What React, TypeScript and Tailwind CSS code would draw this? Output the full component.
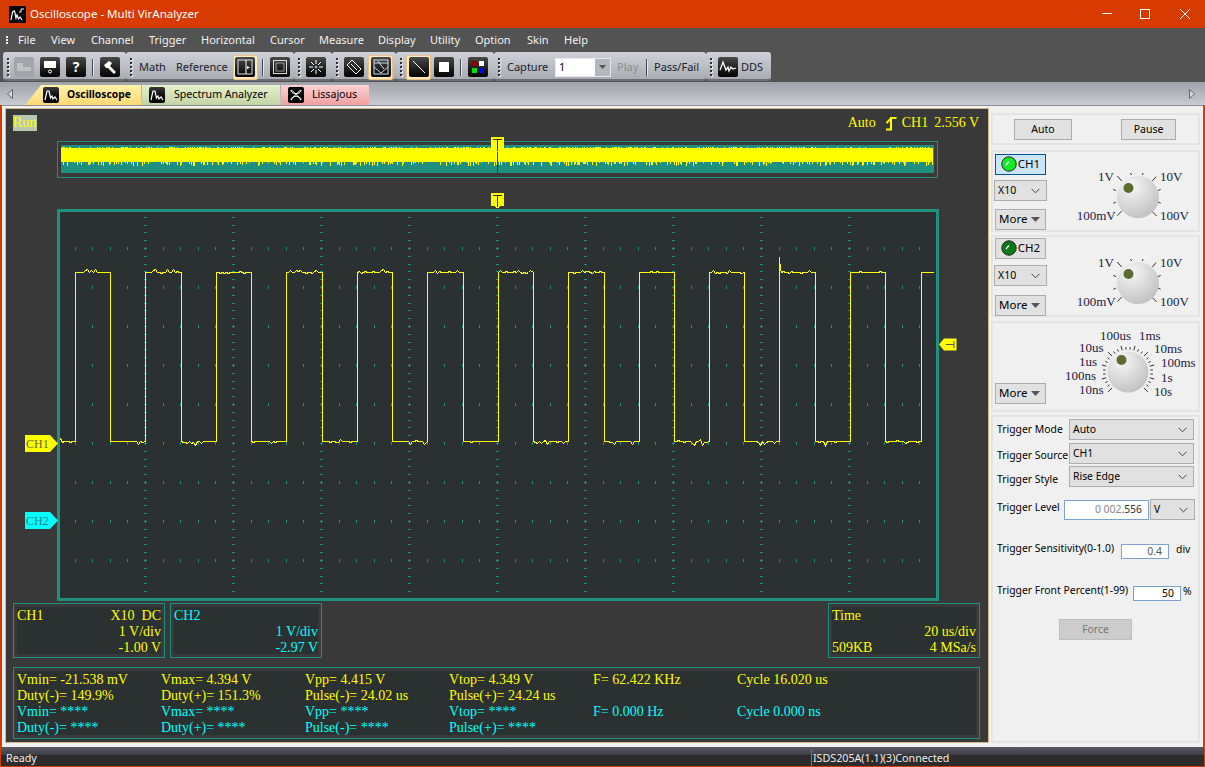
import React from 'react';

// seeded noise so every render gives the same trace
function makeRand(seed: number) {
  let s = seed;
  return () => {
    s = (s * 16807) % 2147483647;
    return (s - 1) / 2147483646;
  };
}

const rises = [75, 145, 216, 286, 357, 427, 498, 568, 639, 709, 779, 850, 921];
const falls = [110, 181, 251, 322, 392, 463, 533, 604, 674, 744, 815, 885, 960];
const PLOT_X = 57;
const PLOT_Y = 209;

function buildTrace() {
  const r = makeRand(4711);
  let d = 'M3 ' + (441 - PLOT_Y - 3);
  const noisy = (from: number, to: number, base: number, up: boolean) => {
    let out = '';
    for (let x = from + 2; x < to - 1; x += 2) {
      const v = r();
      const off = v > 0.78 ? (up ? -1 - Math.round(r() * 2) : -2 + Math.round(r() * 6)) : v < 0.1 ? 1 : 0;
      out += ` L${x - PLOT_X} ${base + off - PLOT_Y}`;
    }
    return out;
  };
  d += noisy(60, 75, 441, false);
  rises.forEach((rx, i) => {
    const fx = Math.min(falls[i], 933);
    d += ` L${rx - PLOT_X} ${441 - PLOT_Y} L${rx - PLOT_X} ${272 - PLOT_Y}`;
    if (rx === 779) d += ` L${rx - PLOT_X} ${257 - PLOT_Y} L${rx - PLOT_X + 1} ${269 - PLOT_Y} L${rx - PLOT_X + 2} ${272 - PLOT_Y}`;
    d += noisy(rx, fx, 272, true);
    d += ` L${fx - PLOT_X} ${272 - PLOT_Y}`;
    if (falls[i] > 933) return;
    d += ` L${fx - PLOT_X} ${441 - PLOT_Y}`;
    d += noisy(fx, rises[i + 1], 441, false);
  });
  return d;
}

function buildOverview() {
  const r = makeRand(991);
  const bars: string[] = [];
  for (let x = 0; x < 872; x += 1) {
    const u = r();
    const v = r();
    const top = u > 0.72 ? 2 : 3;
    const bottom = v > 0.7 ? 18 + Math.round(r() * 3) : 17;
    bars.push(`M${x + 0.5} ${top}V${bottom}`);
  }
  return bars.join('');
}

const tracePath = buildTrace();
const overviewPath = buildOverview();

function gridTicks() {
  let d = '';
  for (let i = 1; i < 10; i++) {
    for (let j = 1; j < 50; j++) {
      d += `M${i * 88 - 1} ${Math.round(j * 7.8) + 0.5}h3`;
    }
  }
  for (let i = 1; i < 10; i++) {
    for (let j = 1; j < 50; j++) {
      d += `M${Math.round(j * 17.6) + 0.5} ${i * 39 - 1}v3`;
    }
  }
  return d;
}

function Grip({ dark = false }: { dark?: boolean }) {
  if (dark) {
    return (
      <div className="flex flex-col gap-[1px] w-[3px] shrink-0">
        {[0, 1, 2].map(i => <span key={i} className="block w-[2px] h-[2px] bg-[#f0f0f0]" />)}
      </div>
    );
  }
  return (
    <div className="flex flex-col gap-[2px] w-[3px] shrink-0">
      {[0, 1, 2, 3, 4].map(i => <span key={i} className="block w-[2px] h-[2px] bg-[#2e2e33] shadow-[1px_1px_0_#eeeeee]" />)}
    </div>
  );
}

function Seg({ className, children }: { className: string; children: React.ReactNode }) {
  return (
    <div className={`h-[29px] shrink-0 pl-[4px] pt-[3px] rounded-[3px] bg-gradient-to-b from-[#cfd2d8] to-[#a9acb3] border-b-[2px] border-[#6b6d72] flex items-center ${className}`}>
      {children}
    </div>
  );
}

function ToolBtn({ children, active = false, off = false }: { children?: React.ReactNode; active?: boolean; off?: boolean }) {
  const face = off ? 'bg-[#a3a5aa]' : 'bg-gradient-to-b from-[#4a4a4a] to-[#050505]';
  if (active) {
    return (
      <div className="w-[25px] h-[25px] rounded-[2px] border border-[#f0c080] bg-[#ffe9c0] flex items-center justify-center shrink-0">
        <div className={`w-[20px] h-[20px] rounded-[2px] flex items-center justify-center ${face}`}>{children}</div>
      </div>
    );
  }
  return <div className={`w-[20px] h-[20px] rounded-[2px] flex items-center justify-center shrink-0 ${face}`}>{children}</div>;
}

function Sep() {
  return <div className="w-px h-[17px] bg-[#45474c] border-r border-[#e6e6e6] box-content shrink-0" />;
}

function Chevron({ className = 'text-[#444]' }: { className?: string }) {
  return (
    <svg width="9" height="6" viewBox="0 0 9 6" className={className}>
      <path d="M0.5 0.8 L4.5 4.8 L8.5 0.8" fill="none" stroke="currentColor" strokeWidth="1" />
    </svg>
  );
}

function ComboBox({ label, className }: { label: string; className: string }) {
  return (
    <div className={`flex items-center justify-between bg-[#e1e1e1] border border-[#adadad] pl-[3px] pr-[6px] text-black ${className}`}>
      <span>{label}</span>
      <Chevron />
    </div>
  );
}

function MoreBtn() {
  return (
    <div className="w-[51px] h-[21px] bg-[#e1e1e1] border border-[#adadad] flex items-center justify-between pl-[3px] pr-[5px] text-[11.5px] text-black">
      <span className="mb-px">More</span>
      <svg width="9" height="5" viewBox="0 0 9 5"><path d="M0 0H9L4.5 5Z" fill="#555" /></svg>
    </div>
  );
}

function Led({ on }: { on: boolean }) {
  return (
    <svg width="16" height="16" viewBox="0 0 16 16" className="shrink-0">
      <circle cx="8" cy="8" r="7.2" fill={on ? '#11ee22' : '#0b7a18'} stroke="#222" strokeWidth="1" />
      <path d="M5 9 L8 5.5" stroke="#fff" strokeWidth="1.2" />
    </svg>
  );
}

function VoltKnob() {
  const ticks = [
    [42.3, 11, 46.7, 16], [55.3, 8, 56.7, 10], [68.3, 8, 67, 10], [81, 11.7, 77.3, 16], [85.7, 24.3, 83, 25.7],
    [85.7, 38.3, 83, 37], [76.7, 46, 81.7, 51], [46.7, 46, 42.3, 50.7], [38.3, 24.3, 41, 25.7], [38.3, 38.3, 41, 37],
  ];
  return (
    <svg width="120" height="64" viewBox="0 0 120 64" className="block font-['Liberation_Serif',serif]">
      <defs>
        <radialGradient id="kv" cx="35%" cy="25%" r="85%">
          <stop offset="0%" stopColor="#f6f6f6" />
          <stop offset="100%" stopColor="#bdbdbd" />
        </radialGradient>
      </defs>
      {ticks.map((t, i) => (
        <line key={i} x1={t[0]} y1={t[1]} x2={t[2]} y2={t[3]} stroke="#333" strokeWidth="1" />
      ))}
      <circle cx="63" cy="32" r="21" fill="url(#kv)" />
      <circle cx="53.5" cy="23" r="5" fill="#5a6d2f" />
      <text x="23" y="16" fontSize="13" fill="#1a1a40">1V</text>
      <text x="85" y="16" fontSize="13" fill="#1a1a40">10V</text>
      <text x="1.7" y="54.5" fontSize="13" fill="#1a1a40">100mV</text>
      <text x="85" y="54.5" fontSize="13" fill="#1a1a40">100V</text>
    </svg>
  );
}

function TimeKnob() {
  const ticks: React.ReactNode[] = [];
  for (let i = 0; i <= 27; i++) {
    const a = ((135 + i * 10) * Math.PI) / 180;
    const r1 = 22.5;
    const r2 = i % 9 === 0 ? 28 : i % 3 === 0 ? 27 : 25;
    ticks.push(
      <line key={i} x1={74 + r1 * Math.cos(a)} y1={50 + r1 * Math.sin(a)} x2={74 + r2 * Math.cos(a)} y2={50 + r2 * Math.sin(a)} stroke="#333" strokeWidth="1" />
    );
  }
  return (
    <svg width="146" height="80" viewBox="0 0 146 80" className="block font-['Liberation_Serif',serif]">
      <defs>
        <radialGradient id="kt" cx="35%" cy="25%" r="85%">
          <stop offset="0%" stopColor="#f6f6f6" />
          <stop offset="100%" stopColor="#bdbdbd" />
        </radialGradient>
      </defs>
      {ticks}
      <circle cx="74" cy="50" r="20.5" fill="url(#kt)" />
      <circle cx="67.5" cy="38" r="5" fill="#5a6d2f" />
      <text x="46" y="17.7" fontSize="13" fill="#1a1a40">100us</text>
      <text x="85" y="17.7" fontSize="13" fill="#1a1a40">1ms</text>
      <text x="25" y="29.7" fontSize="13" fill="#1a1a40">10us</text>
      <text x="100" y="31" fontSize="13" fill="#1a1a40">10ms</text>
      <text x="25" y="43.7" fontSize="13" fill="#1a1a40">1us</text>
      <text x="107" y="44.7" fontSize="13" fill="#1a1a40">100ms</text>
      <text x="11" y="57.7" fontSize="13" fill="#1a1a40">100ns</text>
      <text x="107" y="60" fontSize="13" fill="#1a1a40">1s</text>
      <text x="25" y="72" fontSize="13" fill="#1a1a40">10ns</text>
      <text x="100" y="73.7" fontSize="13" fill="#1a1a40">10s</text>
    </svg>
  );
}

function TMarker() {
  return (
    <svg width="13" height="16" viewBox="0 0 13 16" className="block" shapeRendering="crispEdges">
      <path d="M0 0H13V13H9V14H8V15H5V14H4V13H0Z" fill="#ffff00" />
      <path d="M2 2H11M6 2V14" stroke="#333" strokeWidth="1" fill="none" />
    </svg>
  );
}

function ChMarker({ label, color, text, className }: { label: string; color: string; text: string; className: string }) {
  return (
    <div className={`absolute left-[-35px] h-[17px] w-[33px] flex items-center pl-[1px] text-[12px] font-['Liberation_Serif',serif] ${color} ${text} [clip-path:polygon(0_0,25px_0,33px_50%,25px_100%,0_100%)] ${className}`}>
      {label}
    </div>
  );
}

function Tab({ label, icon, className, textClass }: { label: string; icon: React.ReactNode; className: string; textClass: string }) {
  return (
    <div className={`h-[20px] flex items-center shrink-0 ${className}`}>
      {icon}
      <span className={`text-black ${textClass}`}>{label}</span>
    </div>
  );
}

function ScopeGlyph() {
  return (
    <div className="w-[16px] h-[16px] rounded-[2px] bg-gradient-to-b from-[#3a3a3a] to-black flex items-center justify-center shrink-0">
      <svg width="14" height="14" viewBox="0 0 14 14"><path d="M1 12 L3 3 L5 3 L6.5 10 L8 8 L9 11 L11 9 L13 12" fill="none" stroke="#fff" strokeWidth="1.2" /></svg>
    </div>
  );
}

function Readout({ className, children }: { className: string; children: React.ReactNode }) {
  return <div className={`border border-[#1f8f80] p-[3px] shrink-0 ${className}`}><div className="bg-[#2b3030] h-full pt-px">{children}</div></div>;
}

const yellowStats = [
  ['Vmin= -21.538 mV', 'Vmax= 4.394 V', 'Vpp= 4.415 V', 'Vtop= 4.349 V', 'F= 62.422 KHz', 'Cycle 16.020 us'],
  ['Duty(-)= 149.9%', 'Duty(+)= 151.3%', 'Pulse(-)= 24.02 us', 'Pulse(+)= 24.24 us', '', ''],
];
const cyanStats = [
  ['Vmin= ****', 'Vmax= ****', 'Vpp= ****', 'Vtop= ****', 'F= 0.000 Hz', 'Cycle 0.000 ns'],
  ['Duty(-)= ****', 'Duty(+)= ****', 'Pulse(-)= ****', 'Pulse(+)= ****', '', ''],
];

const menus = [
  ['File', 'w-[33px]'], ['View', 'w-[40px]'], ['Channel', 'w-[58px]'], ['Trigger', 'w-[52px]'], ['Horizontal', 'w-[69px]'], ['Cursor', 'w-[49px]'],
  ['Measure', 'w-[59px]'], ['Display', 'w-[52px]'], ['Utility', 'w-[45px]'], ['Option', 'w-[52px]'], ['Skin', 'w-[37px]'], ['Help', 'w-[40px]'],
];

export default function App() {
  return (
    <div className="w-[1205px] h-[767px] overflow-hidden flex flex-col bg-[#d83b01] font-['Noto_Sans',sans-serif] text-[10.5px] select-none">
      {/* title bar */}
      <div className="h-[28px] shrink-0 flex items-center pl-[9px] text-white">
        <div className="w-[17px] h-[17px] bg-black rounded-[1px] flex items-center justify-center mr-[4px]">
          <svg width="15" height="15" viewBox="0 0 15 15"><path d="M1 13 L2.5 5 L4.5 4 L6 11 L7 8 L8.5 12 L10 10 L12 13" fill="none" stroke="#fff" strokeWidth="1.2" /><path d="M9 5 H11 V2 H14" fill="none" stroke="#fff" strokeWidth="1" /></svg>
        </div>
        <span className="text-[11.5px]">Oscilloscope - Multi VirAnalyzer</span>
        <div className="ml-auto flex items-center">
          <svg width="10" height="10" viewBox="0 0 10 10" className="mr-[28px]"><path d="M0 4.5H10" stroke="#fff" /></svg>
          <svg width="10" height="10" viewBox="0 0 10 10" className="mr-[30px]"><rect x="0.5" y="0.5" width="9" height="9" fill="none" stroke="#fff" /></svg>
          <svg width="10" height="10" viewBox="0 0 10 10" className="mr-[15px]"><path d="M0 0L10 10M10 0L0 10" stroke="#fff" /></svg>
        </div>
      </div>

      {/* menu bar */}
      <div className="h-[24px] shrink-0 bg-[#535353] flex items-center pl-[6px] text-[#f2f2f2] text-[11px]">
        <Grip dark />
        <div className="flex ml-[9px]">
          {menus.map(m => <span key={m[0]} className={m[1]}>{m[0]}</span>)}
        </div>
      </div>

      {/* toolbar */}
      <div className="h-[30px] shrink-0 bg-[#535353] pl-[3px] flex text-[#1c1c2c] text-[11px]">
        <Seg className="w-[123px]">
          <Grip />
          <div className="ml-[4px] flex items-center gap-[6px]">
            <ToolBtn off><svg width="16" height="12" viewBox="0 0 16 12"><path d="M1 2H7V6H15V10H1Z" fill="#c2c2c2" /></svg></ToolBtn>
            <ToolBtn><svg width="14" height="14" viewBox="0 0 14 14"><rect x="1" y="1" width="12" height="7" fill="#fff" /><circle cx="7" cy="11.5" r="1.5" fill="none" stroke="#fff" /></svg></ToolBtn>
            <ToolBtn><span className="text-white text-[14px] font-bold leading-none">?</span></ToolBtn>
            <Sep />
            <ToolBtn><svg width="16" height="16" viewBox="0 0 16 16"><path d="M2 6L7 2L10 4L8 7L14 13L12 15L6 9L4 9Z" fill="#fff" /></svg></ToolBtn>
          </div>
        </Seg>
        <Seg className="w-[168px]">
          <Grip />
          <span className="ml-[6px]">Math</span>
          <span className="ml-[10px]">Reference</span>
          <div className="ml-[5px]"><ToolBtn active><svg width="16" height="16" viewBox="0 0 16 16"><rect x="1" y="1" width="14" height="14" fill="none" stroke="#ddd" /><path d="M9 1V15" stroke="#fff" /><path d="M10 7L13 8.5L10 10" fill="#fff" /></svg></ToolBtn></div>
          <div className="ml-[4px]"><Sep /></div>
          <div className="ml-[6px]"><ToolBtn><svg width="16" height="16" viewBox="0 0 16 16"><rect x="1.5" y="1.5" width="13" height="13" fill="none" stroke="#ddd" /><rect x="4" y="4" width="8" height="8" fill="none" stroke="#999" /></svg></ToolBtn></div>
        </Seg>
        <Seg className="w-[38px]">
          <Grip />
          <div className="ml-[5px]"><ToolBtn><svg width="16" height="16" viewBox="0 0 16 16"><path d="M8 1V5M8 11V15M1 8H5M11 8H15M3 3L6 6M13 3L10 6M3 13L6 10M13 13L10 10" stroke="#fff" fill="none" /><circle cx="8" cy="8" r="1.5" fill="#8ab" /></svg></ToolBtn></div>
        </Seg>
        <Seg className="w-[64px]">
          <Grip />
          <div className="ml-[5px]"><ToolBtn><svg width="16" height="16" viewBox="0 0 16 16"><path d="M6 1L15 10L10 15L1 6Z" fill="none" stroke="#fff" /><path d="M5 5L11 11" stroke="#fff" /></svg></ToolBtn></div>
          <div className="ml-[4px]"><ToolBtn active><svg width="16" height="16" viewBox="0 0 16 16"><rect x="1" y="1" width="14" height="14" fill="none" stroke="#cde" /><path d="M1 4H15M1 8L8 14L15 8M5 2L11 10" fill="none" stroke="#cde" /></svg></ToolBtn></div>
        </Seg>
        <Seg className="w-[98px]">
          <Grip />
          <div className="ml-[3px]"><ToolBtn active><svg width="16" height="16" viewBox="0 0 16 16"><path d="M2 2L14 14" stroke="#fff" /></svg></ToolBtn></div>
          <div className="ml-[3px]"><ToolBtn><span className="block w-[10px] h-[10px] bg-white" /></ToolBtn></div>
          <div className="ml-[6px]"><Sep /></div>
          <div className="ml-[6px]"><ToolBtn><svg width="16" height="16" viewBox="0 0 16 16"><rect x="2" y="2" width="5" height="5" fill="#8b0000" /><rect x="9" y="2" width="5" height="5" fill="#fff" /><rect x="2" y="9" width="5" height="5" fill="#00e000" /><rect x="9" y="9" width="5" height="5" fill="#0000ff" /></svg></ToolBtn></div>
        </Seg>
        <Seg className="w-[212px]">
          <Grip />
          <span className="ml-[6px] w-[41px] whitespace-nowrap">Capture</span>
          <div className="ml-[7px] w-[56px] h-[19px] bg-white border border-[#e8e8e8] flex items-center justify-between pl-[3px] text-black">
            <span>1</span>
            <div className="w-[15px] h-full bg-[#b4b7bd] flex items-center justify-center">
              <svg width="7" height="4" viewBox="0 0 7 4"><path d="M0 0H7L3.5 4Z" fill="#555" /></svg>
            </div>
          </div>
          <span className="ml-[6px] w-[20px] text-[#8a8c90]">Play</span>
          <div className="ml-[9px]"><Sep /></div>
          <span className="ml-[6px] whitespace-nowrap">Pass/Fail</span>
        </Seg>
        <Seg className="w-[65px]">
          <Grip />
          <div className="ml-[5px]"><ToolBtn><svg width="18" height="16" viewBox="0 0 18 16"><path d="M1 11L4 3L7 11L9 8L10 12L12 8L14 10L17 9" fill="none" stroke="#fff" strokeWidth="1.3" /></svg></ToolBtn></div>
          <span className="ml-[3px]">DDS</span>
        </Seg>
      </div>

      {/* tab strip */}
      <div className="h-[23px] shrink-0 bg-gradient-to-b from-[#9ea2a9] to-[#c9ccd2] flex items-end pl-[7px] pr-[10px]">
        <svg width="6" height="10" viewBox="0 0 6 10" className="mb-[6px] mr-[12px]"><path d="M5.5 0.5V9.5L0.5 5Z" fill="#d8dadd" stroke="#666" /></svg>
        <Tab
          label="Oscilloscope"
          icon={<div className="mr-[8px]"><ScopeGlyph /></div>}
          className="w-[116px] pl-[18px] bg-gradient-to-b from-[#fff3a8] to-[#ffd874] [clip-path:polygon(16px_0,100%_0,100%_100%,0_100%)]"
          textClass="font-bold text-[10.3px]"
        />
        <Tab
          label="Spectrum Analyzer"
          icon={<div className="mr-[9px]"><ScopeGlyph /></div>}
          className="w-[138px] ml-px pl-[7px] bg-gradient-to-b from-[#e6f0cc] to-[#c2d5a6]"
          textClass="text-[10.6px]"
        />
        <Tab
          label="Lissajous"
          icon={<div className="mr-[8px] w-[16px] h-[16px] bg-black rounded-[2px] flex items-center justify-center"><svg width="14" height="14" viewBox="0 0 14 14"><path d="M2 2C8 6 8 8 12 12M12 2C6 6 6 8 2 12M2 2C2 7 12 7 12 2M2 12C2 7 12 7 12 12" fill="none" stroke="#fff" /></svg></div>}
          className="w-[88px] ml-px pl-[7px] bg-gradient-to-b from-[#fcd2d2] to-[#f0a0a0]"
          textClass="text-[10.6px]"
        />
        <svg width="6" height="10" viewBox="0 0 6 10" className="ml-auto mb-[6px]"><path d="M0.5 0.5V9.5L5.5 5Z" fill="#d8dadd" stroke="#666" /></svg>
      </div>

      {/* workspace */}
      <div className="flex-1 min-h-0 ml-[2px] mr-[2px] bg-[#f0f0f0] border-t border-[#8d8f94] flex pl-[3px] pt-[2px] pb-[4px]">
        {/* scope side */}
        <div className="w-[984px] shrink-0 border border-[#cdb98a] bg-[#3a3939] font-['Liberation_Serif',serif] text-[14px] leading-[16px] text-[#ffff00] pt-[5px] pl-[7px] pr-[7px]">
          <div className="h-[17px] flex items-center">
            <span className="bg-[#b8c8b0] h-[16px] w-[24px] whitespace-nowrap">Run</span>
            <span className="ml-auto">Auto</span>
            <svg width="12" height="16" viewBox="0 0 12 16" className="ml-[9px]"><path d="M1 14.5H6V3H11.5M1.5 8L6 3.5" fill="none" stroke="#ffff00" strokeWidth="2" /></svg>
            <span className="ml-[5px]">CH1</span>
            <span className="ml-[6px] mr-[2px]">2.556 V</span>
          </div>

          {/* overview strip */}
          <div className="relative ml-[44px] w-[881px] h-[37px] mt-[10px] border border-[#1f8f80] p-[3px]">
            <svg width="873" height="28" viewBox="0 0 873 28" className="block bg-[#1f8f80]" shapeRendering="crispEdges">
              <path d={overviewPath} stroke="#ffff00" strokeWidth="1" fill="none" />
              <path d="M436 0V28" stroke="#333" strokeWidth="1" />
            </svg>
            <div className="absolute left-[433px] top-[-5px]"><TMarker /></div>
          </div>

          {/* main plot */}
          <div className="relative ml-[44px] w-[882px] h-[392px] mt-[31px] border-[3px] border-[#1f8f80] bg-[#2b3030] box-border">
            <svg width="882" height="392" viewBox="0 0 882 392" className="absolute left-[-3px] top-[-3px]" shapeRendering="crispEdges">
              <path d={gridTicks()} stroke="#1f8f80" strokeWidth="1" fill="none" />
              <path d={tracePath} stroke="#ffff00" strokeWidth="1" fill="none" transform="translate(0.5 0.5)" />
            </svg>
            <div className="absolute left-[431px] top-[-19px]"><TMarker /></div>
            <ChMarker label="CH1" color="bg-[#ffff00]" text="text-[#66664d]" className="top-[223px]" />
            <ChMarker label="CH2" color="bg-[#00ffff]" text="text-[#1f7f7f]" className="top-[300px]" />
            <svg width="18" height="15" viewBox="0 0 18 15" className="absolute left-[879px] top-[125px]">
              <path d="M0 7.5L5 1.5H17.5V13.5H5Z" fill="#ffff00" />
              <path d="M7 7.5H15M15 4V11" stroke="#555" fill="none" />
            </svg>
          </div>

          {/* channel readouts */}
          <div className="flex mt-[2px] h-[55px]">
            <Readout className="w-[152px]">
              <div className="flex justify-between"><span>CH1</span><span>X10&nbsp; DC</span></div>
              <div className="text-right">1 V/div</div>
              <div className="text-right">-1.00 V</div>
            </Readout>
            <Readout className="w-[152px] ml-[5px] text-[#00ffff]">
              <div>CH2</div>
              <div className="text-right">1 V/div</div>
              <div className="text-right">-2.97 V</div>
            </Readout>
            <Readout className="w-[152px] ml-auto mr-[1px]">
              <div>Time</div>
              <div className="text-right">20 us/div</div>
              <div className="flex justify-between"><span>509KB</span><span>4 MSa/s</span></div>
            </Readout>
          </div>

          {/* measurements */}
          <div className="mt-[9px] mr-[1px] h-[72px] border border-[#1f8f80] p-[3px]">
            <div className="bg-[#2b3030] h-full pt-px">
              <div className="grid grid-cols-[144px_144px_144px_144px_144px_1fr]">
                {yellowStats.flat().map((t, i) => <div key={i} className="h-[16px] whitespace-nowrap">{t}</div>)}
                {cyanStats.flat().map((t, i) => <div key={i} className="h-[16px] whitespace-nowrap text-[#00ffff]">{t}</div>)}
              </div>
            </div>
          </div>
        </div>

        {/* control side */}
        <div className="flex-1 min-w-0 pl-[2px] pr-[3px] pt-[5px] flex flex-col text-black">
          <div className="h-[32px] shrink-0 border-2 border-[#e4e4e4] flex items-center pl-[21px] pt-px">
            <div className="w-[58px] h-[21px] bg-[#e1e1e1] border border-[#adadad] flex items-center justify-center">Auto</div>
            <div className="w-[55px] h-[21px] ml-[49px] bg-[#e1e1e1] border border-[#adadad] flex items-center justify-center">Pause</div>
          </div>

          <div className="h-[82px] shrink-0 mt-[5px] border-2 border-[#e4e4e4] relative pl-[1px] pt-[2px]">
            <div className="w-[51px] h-[21px] ml-[1px] pb-px bg-[#cce4f7] border border-[#005499] flex items-center justify-center gap-[1px] text-[11.5px]"><Led on />CH1</div>
            <ComboBox label="X10" className="w-[53px] h-[21px] mt-[5px]" />
            <div className="mt-[8px] ml-[1px]"><MoreBtn /></div>
            <div className="absolute left-[82px] top-[13px]"><VoltKnob /></div>
          </div>

          <div className="h-[82px] shrink-0 mt-[3px] border-2 border-[#e4e4e4] relative pl-[1px] pt-[1px]">
            <div className="w-[51px] h-[21px] ml-[1px] pb-px bg-[#e1e1e1] border border-[#adadad] flex items-center justify-center gap-[1px] text-[11.5px]"><Led on={false} />CH2</div>
            <ComboBox label="X10" className="w-[53px] h-[21px] mt-[6px]" />
            <div className="mt-[9px] ml-[1px]"><MoreBtn /></div>
            <div className="absolute left-[82px] top-[14px]"><VoltKnob /></div>
          </div>

          <div className="h-[91px] shrink-0 mt-[4px] border-2 border-[#e4e4e4] relative pl-[2px] pt-[60px]">
            <MoreBtn />
            <div className="absolute left-[61px] top-[-1px]"><TimeKnob /></div>
          </div>

          <div className="flex-1 mt-[3px] border-2 border-[#e4e4e4] pl-[4px] pt-[2px] text-[10.4px]">
            <div className="flex items-center h-[21px]"><span className="w-[72px]">Trigger Mode</span><ComboBox label="Auto" className="w-[125px] h-[21px]" /></div>
            <div className="flex items-center h-[21px] mt-[3px]"><span className="w-[72px] mt-[4px] whitespace-nowrap">Trigger Source</span><ComboBox label="CH1" className="w-[125px] h-[21px]" /></div>
            <div className="flex items-center h-[21px] mt-[2px]"><span className="w-[72px] mt-[6px]">Trigger Style</span><ComboBox label="Rise Edge" className="w-[125px] h-[21px]" /></div>
            <div className="flex items-center h-[21px] mt-[12px]">
              <span className="w-[67px] mb-[4px]">Trigger Level</span>
              <div className="w-[85px] h-[20px] bg-white border border-[#7da2ce] flex items-center justify-end pr-[6px]"><span className="text-[#8a8a8a]">0 002</span><span className="text-[#333]">.556</span></div>
              <ComboBox label="V" className="w-[45px] h-[21px] ml-px" />
            </div>
            <div className="flex items-center h-[15px] mt-[24px]">
              <span className="w-[124px] mb-[6px] whitespace-nowrap">Trigger Sensitivity(0-1.0)</span>
              <div className="w-[48px] h-[15px] bg-white border border-[#7da2ce] flex items-center justify-end pr-[6px] text-[#555]">0.4</div>
              <span className="ml-[7px] mb-[3px]">div</span>
            </div>
            <div className="flex items-center h-[15px] mt-[27px]">
              <span className="w-[136px] mb-[6px] whitespace-nowrap">Trigger Front Percent(1-99)</span>
              <div className="w-[48px] h-[15px] bg-white border border-[#7da2ce] flex items-center justify-end pr-[6px]">50</div>
              <span className="ml-[2px] mb-[3px]">%</span>
            </div>
            <div className="w-[73px] h-[21px] ml-[62px] mt-[18px] bg-[#cccccc] border border-[#bfbfbf] flex items-center justify-center text-[#777]">Force</div>
          </div>
        </div>
      </div>

      {/* status bar */}
      <div className="h-[19px] shrink-0 ml-[1px] mr-[1px] mb-[1px] pt-[3px] bg-[linear-gradient(to_bottom,#5a5a64_0,#3c3c44_8px,#2c2c2c_8px,#2c2c2c_100%)] flex items-center pl-[5px] text-[#eeeeee] text-[10.7px]">
        <span>Ready</span>
        <span className="ml-auto w-[393px] pl-[1px] border-l border-[#777]">ISDS205A(1.1)(3)Connected</span>
      </div>
    </div>
  );
}
